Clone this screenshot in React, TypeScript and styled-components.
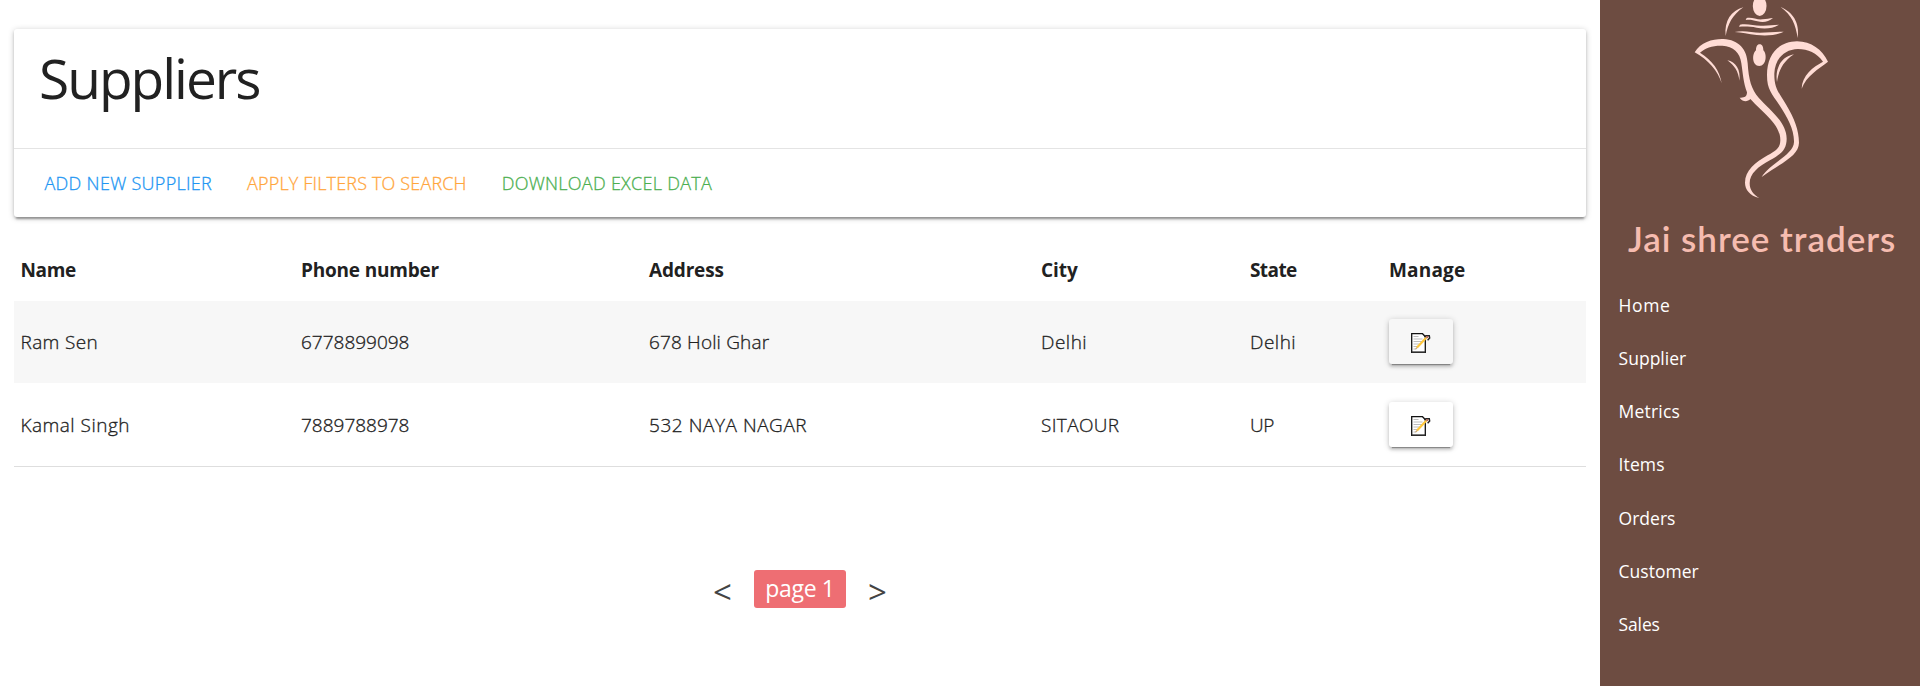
import React from 'react';
import styled, { createGlobalStyle } from 'styled-components';

const GlobalStyle = createGlobalStyle`
  *, *::before, *::after { box-sizing: border-box; }
  body {
    margin: 0;
    background: #fff;
    color: #212121;
    font-family: 'Segoe UI', 'Open Sans', 'Noto Sans', sans-serif;
  }
`;

const Page = styled.div`
  display: flex;
  height: 686px;
  overflow: hidden;
`;

const Main = styled.main`
  flex: 1;
  padding: 29px 14px 0;
`;

const Card = styled.section`
  height: 188px;
  border-radius: 3px;
  background: #fff;
  box-shadow: 0 2px 3px 0 rgba(0, 0, 0, 0.16), 0 4px 2px -2px rgba(0, 0, 0, 0.24),
    0 1px 6px 0 rgba(0, 0, 0, 0.2);
`;

const CardTitle = styled.h1`
  height: 119px;
  margin: 0;
  padding: 14px 25px 0;
  font-size: 55px;
  font-weight: 400;
  line-height: 70px;
  letter-spacing: -2px;
`;

const CardActions = styled.div`
  display: flex;
  align-items: center;
  gap: 35px;
  height: 69px;
  padding: 0 30.5px;
  border-top: 1px solid #e4e4e4;
`;

const Tracked = styled.span<{ $track?: number }>`
  letter-spacing: ${({ $track = 0 }) => $track}px;
  white-space: nowrap;
`;

const ActionLink = styled(Tracked)<{ $color: string }>`
  color: ${({ $color }) => $color};
  font-size: 18px;
  font-weight: 300;
  -webkit-text-stroke: 0.3px currentColor;
  text-transform: uppercase;
`;

const Table = styled.table`
  width: 100%;
  margin-top: 22px;
  table-layout: fixed;
  border-collapse: separate;
  border-spacing: 0;
  border-bottom: 1px solid #dedede;
  font-size: 19px;
  line-height: 26px;
`;

const Col = styled.col<{ $width?: number }>`
  width: ${({ $width }) => ($width ? `${$width}px` : 'auto')};
`;

const HeadCell = styled.th`
  height: 62px;
  padding: 0 7px;
  text-align: left;
  font-weight: 700;

  &:first-child { padding-left: 6.5px; }
`;

const Row = styled.tr<{ $height: number }>`
  height: ${({ $height }) => $height}px;

  &:nth-child(odd) { background: #f7f7f7; }
`;

const Cell = styled.td`
  padding: 0 7px;
  font-weight: 300;
  -webkit-text-stroke: 0.3px currentColor;
  vertical-align: middle;

  &:first-child { padding-left: 6.5px; }
`;

const EditButton = styled.button<{ $shade: string }>`
  display: flex;
  align-items: center;
  justify-content: center;
  width: 64px;
  height: 45px;
  margin-bottom: 1px;
  padding: 3px 0 0;
  border: 0;
  border-radius: 3px;
  background: ${({ $shade }) => $shade};
  box-shadow: 0 3px 3px 0 rgba(0, 0, 0, 0.14), 0 4px 1px -3px rgba(0, 0, 0, 0.3),
    0 1px 6px 0 rgba(0, 0, 0, 0.2);
`;

const Pager = styled.nav`
  display: flex;
  align-items: flex-start;
  justify-content: center;
  margin-top: 103px;
`;

const Arrow = styled.button`
  width: 60px;
  height: 46px;
  padding: 0 0 3px;
  border: 0;
  background: none;
  color: #444;
  font: 400 33px/43px 'Open Sans', sans-serif;
`;

const PageChip = styled.span`
  width: 92px;
  height: 38px;
  margin: 0 1.5px;
  border-radius: 3px;
  background: #ee6e73;
  color: #fff;
  font-size: 23px;
  line-height: 37px;
  letter-spacing: -0.34px;
  text-align: center;
`;

const Sidebar = styled.aside`
  width: 320px;
  background: #6d4c41;
`;

const Brand = styled.div`
  height: 278px;
  color: #f6bcb0;
`;

const Emblem = styled.svg`
  display: block;
  width: 320px;
  height: 210px;
  fill: #ffdcd5;
`;

const BrandName = styled.div`
  padding-left: 28px;
  font: 600 35px/56px Lato, sans-serif;
  letter-spacing: 0.97px;
  white-space: nowrap;
`;

const NavList = styled.ul`
  margin: 0;
  padding: 0 0 0 18.6px;
  list-style: none;
`;

const NavItem = styled.li`
  height: 53.15px;
  color: #fff;
  font-size: 17.5px;
  line-height: 54px;
`;

const actions = [
  { label: 'Add new supplier', color: '#2196f3', track: 0.3 },
  { label: 'Apply filters to search', color: '#ffa63d', track: 0.16 },
  { label: 'Download excel data', color: '#4caf50', track: 0.28 },
];

const columns = [
  { label: 'Name', width: 280, track: -0.37 },
  { label: 'Phone number', width: 348, track: -0.2 },
  { label: 'Address', width: 392, track: -0.17 },
  { label: 'City', width: 209, track: -0.07 },
  { label: 'State', width: 139, track: -0.6 },
  { label: 'Manage', width: undefined, track: 0.18 },
];

const suppliers: [string, number][][] = [
  [['Ram Sen', 0.35], ['6778899098', 0], ['678 Holi Ghar', 0.15], ['Delhi', 0.5], ['Delhi', 0.5]],
  [['Kamal Singh', 0.48], ['7889788978', 0], ['532 NAYA NAGAR', 0.55], ['SITAOUR', 0.35], ['UP', -0.5]],
];

const links: [string, number][] = [
  ['Home', 0.6],
  ['Supplier', 0],
  ['Metrics', 0.2],
  ['Items', 0.1],
  ['Orders', 0],
  ['Customer', 0],
  ['Sales', -0.15],
];

const MemoIcon = () => (
  <svg width="20" height="20" viewBox="0 0 20 20">
    <path d="M.7.7H11.5L14.3 3.5V19.3H.7Z" fill="#fff" stroke="#111" strokeWidth="1.3" />
    <path d="M1 19.2H14" stroke="#333" strokeWidth="1.4" />
    <path d="M2.5 3.5H7.5M2.5 6H11.5M2.5 8.5H11.5M2.5 11H10M2.5 13.5H8M2.5 16H5" stroke="#bdbdbd" strokeWidth="1" />
    <path d="M6 14.5L15.2 4.8" stroke="#ffc83d" strokeWidth="2.2" />
    <path d="M4.6 16.2L6.3 14.4" stroke="#c9a36a" strokeWidth="1.2" />
    <path d="M13 3.2L15.5 2.6L18.3 2.7L18.7 5L16.6 7.2" fill="none" stroke="#222" strokeWidth="1.4" />
    <path d="M15.3 4.7L17 3.6" stroke="#b5624f" strokeWidth="2" />
  </svg>
);

const GaneshaEmblem = () => (
  <Emblem viewBox="0 0 960 630">
    <ellipse cx="479" cy="18" rx="20.500" ry="30" />
    <path d="M430 22C394 32 372 62 377 108C384 72 396 46 430 22Z" />
    <path d="M542 21C578 36 600 68 593 114C587 74 576 46 542 21Z" />
    <path d="M440 54C455 50 470 60 488 58C500 57 508 55 519 54C505 67 488 68 472 64C458 60 450 58 437 60Z" />
    <path d="M420 74C445 70 465 79 490 77C508 76 520 75 537 74C517 87 490 87 470 83C450 79 435 79 417 80Z" />
    <path d="M404 96C430 90 455 97 480 98C508 98 530 95 551 95C530 106 500 108 470 105C445 102 425 97 404 96Z" />
    <path d="M479 133C487 133 490 141 490 151C502 162 499 198 478 198C456 198 455 162 468 151C468 141 471 133 479 133Z" />
    <path d="M365 250C354 213 325 180 284 157C302 126 340 116 370 117C417 119 441 149 443 190C446 239 454 268 476 293C505 326 560 365 560 416C560 449 542 463 511 480C475 499 449 521 449 550C449 570 461 585 478 594C449 587 435 568 435 548C435 512 466 487 503 466C528 451 541 444 541 420C541 373 489 338 451 297C443 305 430 308 419 293C433 294 441 290 441 277C430 249 429 222 424 190C420 157 400 139 367 137C339 136 316 143 300 158C337 181 359 211 365 250Z" />
    <path d="M382 181C407 184 423 211 418 242C415 214 403 196 382 181Z" />
    <path d="M605 266C606 226 639 201 669 185C650 158 624 147 594 147C552 148 525 178 523 220C522 266 538 279 559 315C583 355 597 391 597 428C596 467 550 485 485 531C511 488 581 465 582 426C583 389 562 352 538 315C516 281 501 270 501 225C501 164 535 125 591 124C634 125 666 148 684 185C656 207 619 227 605 266Z" />
    <path d="M582 163C545 169 524 204 531 246C536 211 549 185 582 163Z" />
  </Emblem>
);

export default function App() {
  return (
    <>
      <GlobalStyle />
      <Page>
        <Main>
          <Card>
            <CardTitle>Suppliers</CardTitle>
            <CardActions>
              {actions.map((a) => (
                <ActionLink key={a.label} $color={a.color} $track={a.track}>
                  {a.label}
                </ActionLink>
              ))}
            </CardActions>
          </Card>
          <Table>
            <colgroup>
              {columns.map((c) => (
                <Col key={c.label} $width={c.width} />
              ))}
            </colgroup>
            <thead>
              <tr>
                {columns.map((c) => (
                  <HeadCell key={c.label}>
                    <Tracked $track={c.track}>{c.label}</Tracked>
                  </HeadCell>
                ))}
              </tr>
            </thead>
            <tbody>
              {suppliers.map((row, i) => (
                <Row key={i} $height={i % 2 ? 83 : 82}>
                  {row.map(([text, track], j) => (
                    <Cell key={j}>
                      <Tracked $track={track}>{text}</Tracked>
                    </Cell>
                  ))}
                  <Cell>
                    <EditButton aria-label="Edit" $shade={i % 2 ? '#fff' : '#f7f7f7'}>
                      <MemoIcon />
                    </EditButton>
                  </Cell>
                </Row>
              ))}
            </tbody>
          </Table>
          <Pager>
            <Arrow>&lt;</Arrow>
            <PageChip>page 1</PageChip>
            <Arrow>&gt;</Arrow>
          </Pager>
        </Main>
        <Sidebar>
          <Brand>
            <GaneshaEmblem />
            <BrandName>Jai shree traders</BrandName>
          </Brand>
          <NavList>
            {links.map(([label, track]) => (
              <NavItem key={label}>
                <Tracked $track={track}>{label}</Tracked>
              </NavItem>
            ))}
          </NavList>
        </Sidebar>
      </Page>
    </>
  );
}
